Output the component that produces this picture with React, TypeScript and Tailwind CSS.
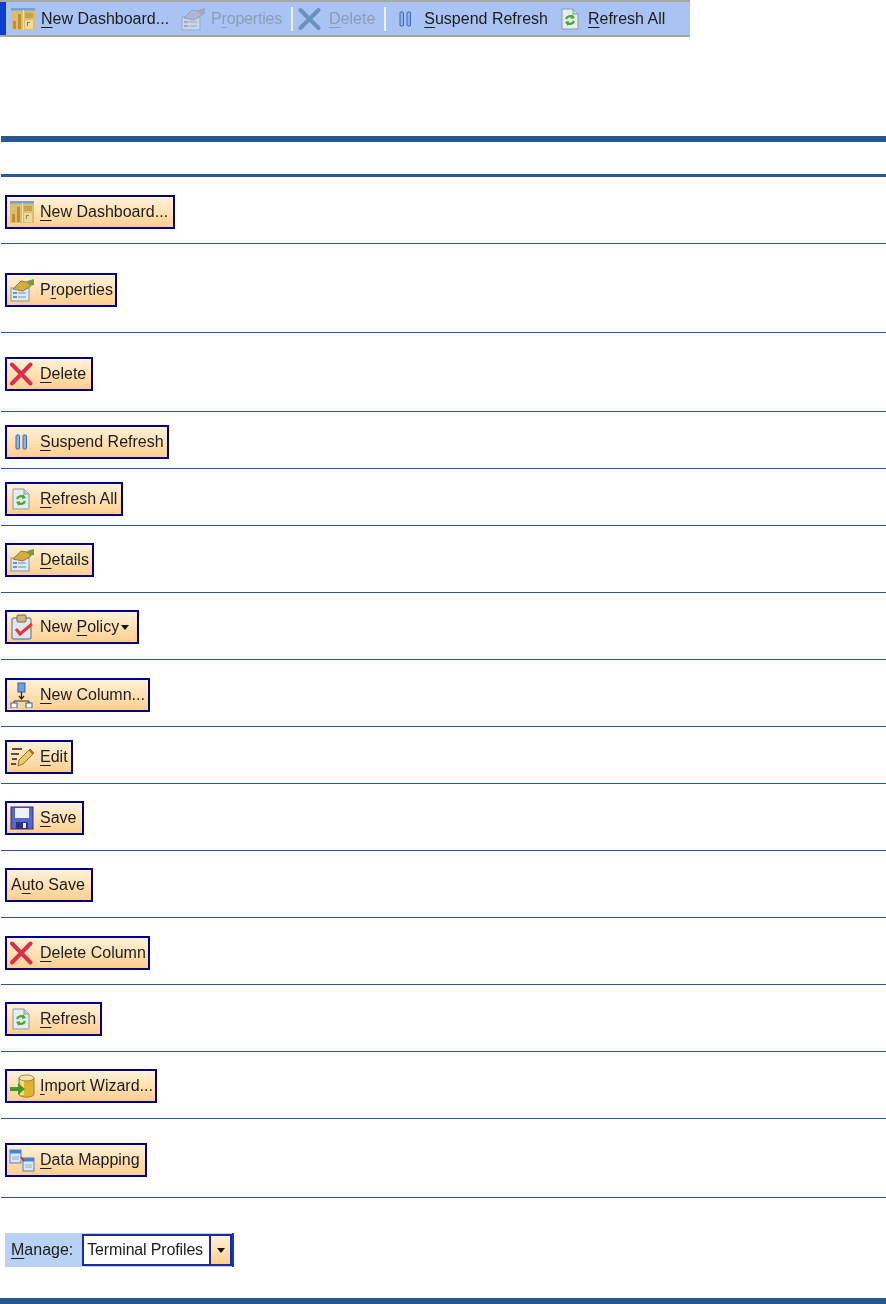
import React from 'react';

const DashboardIcon = () => (
  <svg width="26" height="24" viewBox="0 0 26 24">
    <rect x="1" y="1" width="24" height="22" fill="#dcbd6e" />
    <rect x="1" y="1" width="24" height="2.5" fill="#6ba3e4" />
    <rect x="3" y="14" width="3" height="8" fill="#bd9133" />
    <rect x="8" y="7" width="3" height="15" fill="#bd9133" />
    <rect x="13" y="3" width="1" height="20" fill="#f0e0b0" />
    <rect x="15" y="6" width="8" height="5" fill="#c9a34a" />
    <rect x="15" y="13" width="8" height="9" fill="#ecd9a0" />
    <rect x="17" y="15" width="3" height="1" fill="#a57c25" />
    <rect x="17" y="15" width="1" height="4" fill="#a57c25" />
  </svg>
);

const PropertiesIcon = () => (
  <svg width="26" height="24" viewBox="0 0 26 24">
    <rect x="2" y="10" width="18" height="13" fill="#dfe9f3" stroke="#7b95ad" />
    <rect x="4" y="14" width="4" height="2" fill="#7b95ad" />
    <rect x="9" y="14" width="8" height="2" fill="#a9bccd" />
    <rect x="4" y="18" width="4" height="2" fill="#7b95ad" />
    <rect x="9" y="18" width="8" height="2" fill="#a9bccd" />
    <path d="M4 11 L12 3 L18 4 L22 8 L14 13 Z" fill="#d4ad3e" stroke="#7a6a3a" strokeWidth="0.8" />
    <path d="M18 3 L25 1 L25 7 L21 8 Z" fill="#6f9f4a" />
  </svg>
);

const DeleteIcon = () => (
  <svg width="24" height="24" viewBox="0 0 24 24">
    <path d="M2 2.5 L20.5 21.5 M20.5 2.5 L2 21.5" stroke="#d6304d" strokeWidth="4" strokeLinecap="round" />
  </svg>
);

const PauseIcon = () => (
  <svg width="24" height="24" viewBox="0 0 24 24">
    <rect x="6" y="5" width="3.5" height="14" rx="1" fill="#8db4ea" stroke="#2f5fb0" strokeWidth="0.9" />
    <rect x="13" y="5" width="3.5" height="14" rx="1" fill="#8db4ea" stroke="#2f5fb0" strokeWidth="0.9" />
  </svg>
);

const RefreshIcon = () => (
  <svg width="24" height="24" viewBox="0 0 24 24">
    <path d="M3 2 H14 L19 7 V22 H3 Z" fill="#e3eeee" stroke="#8d9aa0" />
    <path d="M14 2 V7 H19" fill="#c4d0d4" stroke="#8d9aa0" />
    <path d="M7 12 A4.5 4.5 0 0 1 14 10 M15 14 A4.5 4.5 0 0 1 8 16" fill="none" stroke="#4aa52e" strokeWidth="2.2" />
    <path d="M13 7 L16 11 L12 12 Z M9 19 L6 15 L10 14 Z" fill="#4aa52e" />
  </svg>
);

const PolicyIcon = () => (
  <svg width="24" height="26" viewBox="0 0 24 26">
    <rect x="2" y="4" width="19" height="21" rx="2" fill="#dfe6f0" stroke="#7f8ea6" strokeWidth="1.4" />
    <rect x="7" y="1" width="9" height="7" rx="1" fill="#cdb877" stroke="#7a6a3a" />
    <path d="M6 15 L10 20 L22 10" fill="none" stroke="#dd3a32" strokeWidth="3" />
  </svg>
);

const ColumnIcon = () => (
  <svg width="24" height="26" viewBox="0 0 24 26">
    <rect x="8" y="1" width="7" height="9" fill="#6f9fe0" stroke="#2f5fb0" />
    <path d="M11.5 10 V16 M9 14 L11.5 17 L14 14" fill="none" stroke="#222" strokeWidth="1.2" />
    <path d="M4 23 V19 H19 V23" fill="none" stroke="#333" />
    <rect x="1" y="21" width="6" height="5" fill="#fff" stroke="#2f5fb0" />
    <rect x="16" y="21" width="6" height="5" fill="#fff" stroke="#2f5fb0" />
  </svg>
);

const EditIcon = () => (
  <svg width="26" height="24" viewBox="0 0 26 24">
    <path d="M3 4 H13 M2 9 H10 M3 14 H8 M2 19 H7" stroke="#222" strokeWidth="1.6" />
    <path d="M9 21 L10 15 L21 4 L25 8 L14 19 Z" fill="#eccb6b" stroke="#7a5a20" strokeWidth="0.8" />
    <path d="M21 4 L25 8 L23.5 9.5 L19.5 5.5 Z" fill="#d8553f" />
  </svg>
);

const SaveIcon = () => (
  <svg width="24" height="24" viewBox="0 0 24 24">
    <rect x="1" y="1" width="22" height="22" fill="#5a66c8" stroke="#2b327e" />
    <rect x="5" y="2" width="14" height="10" fill="#eef1fa" />
    <rect x="6" y="16" width="12" height="7" fill="#2b327e" />
    <rect x="13" y="17" width="3" height="5" fill="#e6e8f2" />
  </svg>
);

const ImportIcon = () => (
  <svg width="26" height="24" viewBox="0 0 26 24">
    <path d="M10 4 V20 A7 3 0 0 0 25 20 V4 Z" fill="#e0b32e" stroke="#8a6d1f" strokeWidth="0.8" />
    <rect x="11" y="6" width="4" height="15" fill="#f3dc8c" />
    <ellipse cx="17.5" cy="4" rx="7.5" ry="3" fill="#f5e6b0" stroke="#8a6d1f" strokeWidth="0.8" />
    <path d="M1 13 H9 V9 L16 15 L9 21 V17 H1 Z" fill="#3f9a2a" />
  </svg>
);

const MappingIcon = () => (
  <svg width="26" height="24" viewBox="0 0 26 24">
    <rect x="1" y="2" width="11" height="13" fill="#dce6f4" stroke="#5a7fb5" />
    <rect x="1" y="2" width="11" height="3.5" fill="#3f86e0" />
    <rect x="3" y="8" width="7" height="4" fill="#b8cbe4" />
    <rect x="14" y="10" width="11" height="13" fill="#dce6f4" stroke="#5a7fb5" />
    <rect x="14" y="10" width="11" height="3.5" fill="#3f86e0" />
    <rect x="16" y="16" width="7" height="4" fill="#b8cbe4" />
    <path d="M12 9 L15 13" stroke="#d22" strokeWidth="1.6" />
  </svg>
);

const Caret = () => (
  <svg width="8" height="5" viewBox="0 0 8 5">
    <path d="M0 0 H8 L4 5 Z" fill="#111" />
  </svg>
);

// `hot` is the letter with the mnemonic underline
const Label = ({ pre = '', hot, post }: { pre?: string; hot: string; post: string }) => (
  <span className="whitespace-pre blur-[0.3px]">
    {pre}
    <span className="underline underline-offset-[3px] decoration-1">{hot}</span>
    {post}
  </span>
);

const rows = [
  { row: 'h-[67px] pt-[18px]', btn: 'w-[170px]', icon: <DashboardIcon />, pre: '', hot: 'N', post: 'ew Dashboard...' },
  { row: 'h-[89px] pt-[29px]', btn: 'w-[112px]', icon: <PropertiesIcon />, pre: 'P', hot: 'r', post: 'operties' },
  { row: 'h-[79px] pt-[24px]', btn: 'w-[88px]', icon: <DeleteIcon />, pre: '', hot: 'D', post: 'elete' },
  { row: 'h-[57px] pt-[13px]', btn: 'w-[164px]', icon: <PauseIcon />, pre: '', hot: 'S', post: 'uspend Refresh' },
  { row: 'h-[57px] pt-[13px]', btn: 'w-[118px]', icon: <RefreshIcon />, pre: '', hot: 'R', post: 'efresh All' },
  { row: 'h-[67px] pt-[17px]', btn: 'w-[89px]', icon: <PropertiesIcon />, pre: '', hot: 'D', post: 'etails' },
  { row: 'h-[67px] pt-[17px]', btn: 'w-[134px]', icon: <PolicyIcon />, pre: 'New ', hot: 'P', post: 'olicy', caret: true },
  { row: 'h-[67px] pt-[18px]', btn: 'w-[145px]', icon: <ColumnIcon />, pre: '', hot: 'N', post: 'ew Column...' },
  { row: 'h-[57px] pt-[13px]', btn: 'w-[68px]', icon: <EditIcon />, pre: '', hot: 'E', post: 'dit' },
  { row: 'h-[67px] pt-[17px]', btn: 'w-[79px]', icon: <SaveIcon />, pre: '', hot: 'S', post: 'ave' },
  { row: 'h-[67px] pt-[17px]', btn: 'w-[88px]', pre: 'A', hot: 'u', post: 'to Save' },
  { row: 'h-[67px] pt-[18px]', btn: 'w-[145px]', icon: <DeleteIcon />, pre: '', hot: 'D', post: 'elete Column' },
  { row: 'h-[67px] pt-[17px]', btn: 'w-[97px]', icon: <RefreshIcon />, pre: '', hot: 'R', post: 'efresh' },
  { row: 'h-[67px] pt-[17px]', btn: 'w-[152px]', icon: <ImportIcon />, pre: '', hot: 'I', post: 'mport Wizard...' },
  { row: 'h-[79px] pt-[24px]', btn: 'w-[142px]', icon: <MappingIcon />, pre: '', hot: 'D', post: 'ata Mapping' },
];

export default function App() {
  return (
    <div className="w-[886px] h-[1304px] bg-white overflow-hidden text-[16px] text-[#1c1c1c] font-['Liberation_Sans',sans-serif]">
      {/* captured toolbar */}
      <div className="flex items-center w-[690px] h-[37px] bg-[#a9c4f2] border-t-2 border-b-2 border-[#a8a8a0]">
        <div className="w-[6px] h-full bg-[#0a3cd0]" />
        <div className="flex items-center gap-[5px] whitespace-nowrap ml-[4px]">
          <span className="blur-[0.4px] flex"><DashboardIcon /></span>
          <Label hot="N" post="ew Dashboard..." />
        </div>
        <div className="flex items-center gap-[5px] whitespace-nowrap ml-[11px] text-[#8c9cb4]">
          <span className="opacity-50 grayscale blur-[0.4px] flex"><PropertiesIcon /></span>
          <span className="tracking-[-0.2px]"><Label pre="P" hot="r" post="operties" /></span>
        </div>
        <div className="w-[2px] h-[24px] ml-[9px] bg-[#e8f0fc]" />
        <div className="flex items-center gap-[7px] whitespace-nowrap ml-[5px] text-[#8c9cb4]">
          <svg width="24" height="24" viewBox="0 0 24 24" className="blur-[0.4px]">
            <path d="M2.5 3 L20.5 21 M20.5 3 L2.5 21" stroke="#6c90bc" strokeWidth="4" strokeLinecap="round" />
          </svg>
          <Label hot="D" post="elete" />
        </div>
        <div className="w-[2px] h-[24px] ml-[9px] bg-[#e8f0fc]" />
        <div className="flex items-center gap-[6px] whitespace-nowrap ml-[8px]">
          <span className="blur-[0.4px] flex"><PauseIcon /></span>
          <Label hot="S" post="uspend Refresh" />
        </div>
        <div className="flex items-center gap-[5px] whitespace-nowrap ml-[11px]">
          <span className="blur-[0.4px] flex"><RefreshIcon /></span>
          <Label hot="R" post="efresh All" />
        </div>
      </div>

      {/* table */}
      <div className="mt-[99px] ml-px">
        <div className="h-[6px] bg-[#2b5797]" />
        <div className="h-[32px]" />
        <div className="h-[3px] bg-[#2b5797]" />
        {rows.map((r, i) => (
          <div key={i} className={`${r.row} border-b border-[#2b5797] pl-[4px]`}>
            <div className={`${r.btn} h-[34px] flex items-center border-2 border-[#000080] bg-gradient-to-b from-[#fff2d8] to-[#fecf8f]`}>
              {r.icon ? (
                <span className="flex justify-center items-center w-[33px] pr-[4px] shrink-0 blur-[0.4px]">{r.icon}</span>
              ) : (
                <span className="w-[4px]" />
              )}
              <Label pre={r.pre} hot={r.hot} post={r.post} />
              {r.caret && <span className="ml-[2px] flex"><Caret /></span>}
            </div>
          </div>
        ))}

        {/* manage row */}
        <div className="h-[100px] pt-[35px] pl-[4px]">
          <div className="flex items-center w-[229px] h-[34px] bg-[#b9d1f3] border-r-2 border-[#0a3cd0]">
            <span className="ml-[6px]"><Label hot="M" post="anage:" /></span>
            <div className="flex ml-[9px] h-[32px] w-[150px] border-2 border-[#1c2a9c] bg-white">
              <span className="flex-1 pl-[3px] leading-[28px] whitespace-nowrap tracking-[-0.15px] blur-[0.3px]">Terminal Profiles</span>
              <span className="flex items-center justify-center w-[21px] border-l-2 border-[#1c2a9c] bg-gradient-to-b from-[#fff2d8] to-[#fecf8f]"><Caret /></span>
            </div>
          </div>
        </div>
        <div className="h-[6px] bg-[#2b5797] -ml-px" />
      </div>
    </div>
  );
}
